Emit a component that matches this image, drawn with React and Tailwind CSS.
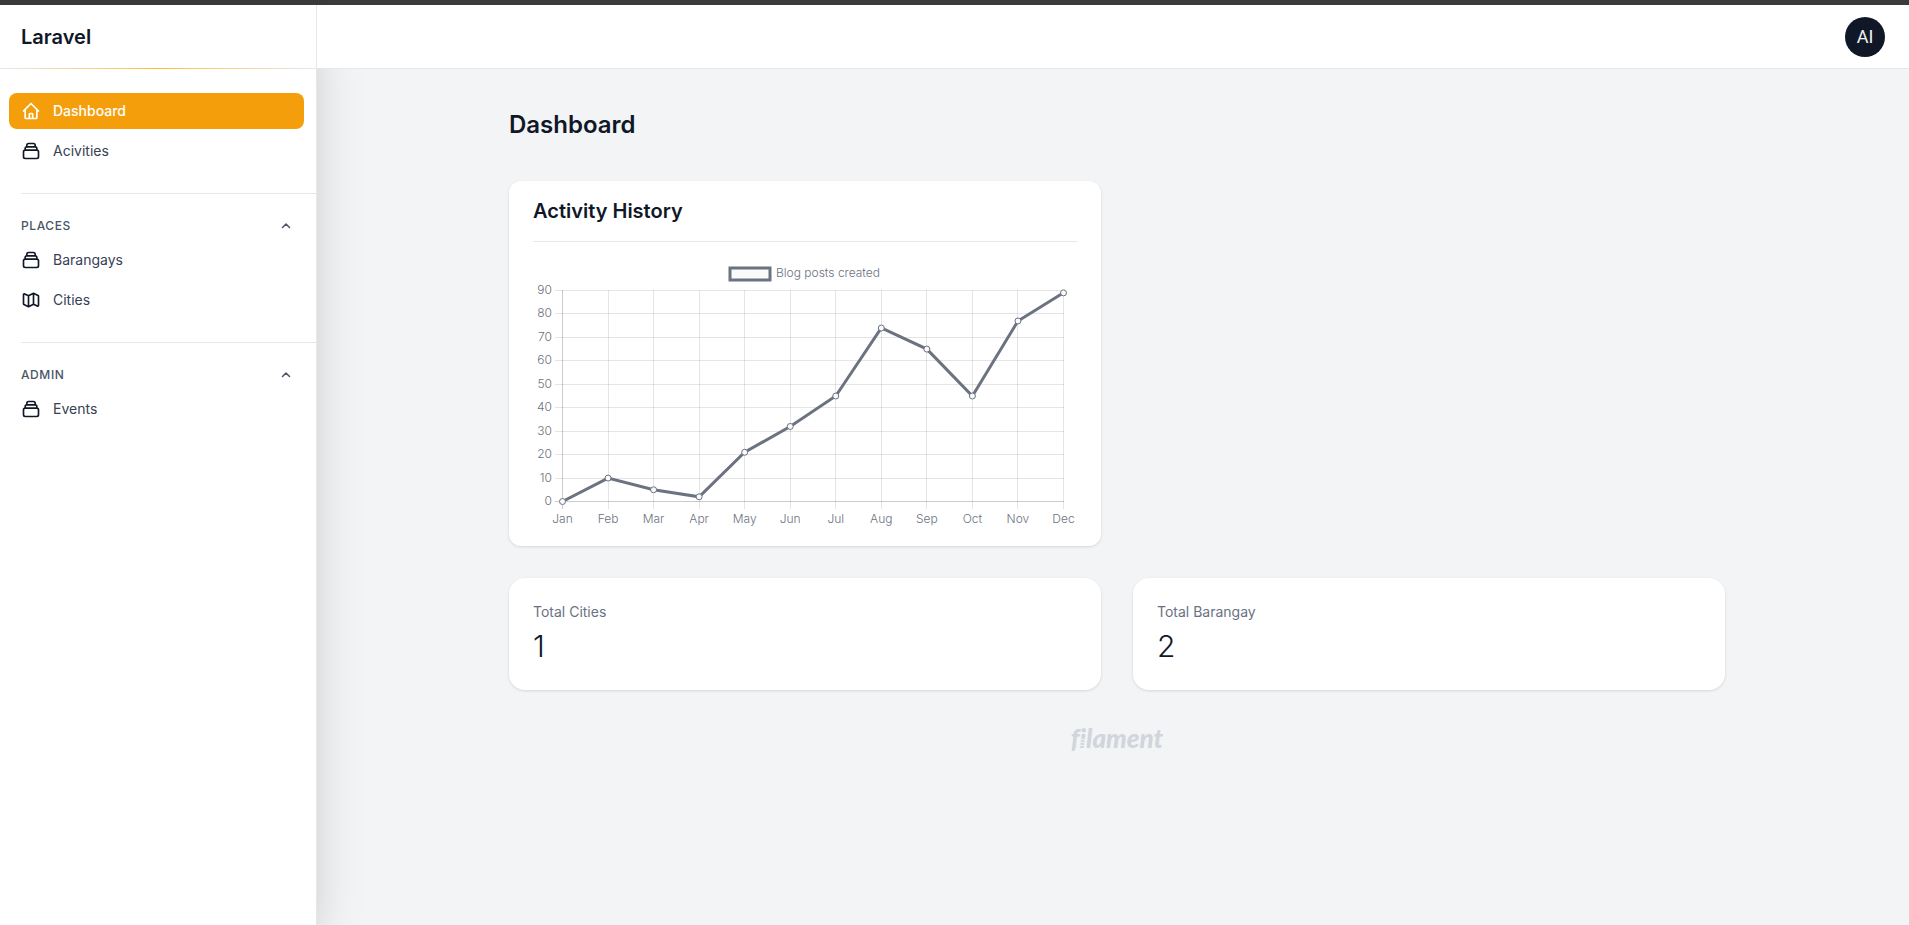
import React from 'react';

const ICONS = {
  home: 'M3 12l2-2m0 0l7-7 7 7M5 10v10a1 1 0 001 1h3m10-11l2 2m-2-2v10a1 1 0 01-1 1h-3m-6 0a1 1 0 001-1v-4a1 1 0 011-1h2a1 1 0 011 1v4a1 1 0 001 1m-6 0h6',
  collection:
    'M19 11H5m14 0a2 2 0 012 2v6a2 2 0 01-2 2H5a2 2 0 01-2-2v-6a2 2 0 012-2m14 0V9a2 2 0 00-2-2M5 11V9a2 2 0 012-2m0 0V5a2 2 0 012-2h6a2 2 0 012 2v2M7 7h10',
  map: 'M9 20l-5.447-2.724A1 1 0 013 16.382V5.618a1 1 0 011.447-.894L9 7m0 13l6-3m-6 3V7m6 10l4.553 2.276A1 1 0 0021 18.382V7.618a1 1 0 00-.553-.894L15 4m0 13V4m0 0L9 7',
  chevronUp: 'M5 15l7-7 7 7',
};

function Icon({ name, strokeWidth = 2, className }) {
  return (
    <svg
      viewBox="0 0 24 24"
      fill="none"
      stroke="currentColor"
      strokeWidth={strokeWidth}
      strokeLinecap="round"
      strokeLinejoin="round"
      aria-hidden="true"
      className={className}
    >
      <path d={ICONS[name]} />
    </svg>
  );
}

function NavItem({ icon, label, active }) {
  return (
    <li>
      <a
        href="#"
        aria-current={active ? 'page' : undefined}
        className={
          active
            ? 'flex h-9 items-center gap-3 rounded-lg bg-[#f59e0b] px-3 text-sm font-medium text-white'
            : 'flex h-9 items-center gap-3 rounded-lg px-3 text-sm text-gray-700'
        }
      >
        <Icon name={icon} className={active ? 'size-5 shrink-0' : 'size-5 shrink-0 text-gray-900'} />
        {label}
      </a>
    </li>
  );
}

function NavGroup({ title, children }) {
  return (
    <section>
      {title && (
        <button type="button" className="mb-2 flex h-4 w-full items-center justify-between px-3 text-gray-600">
          <span className="text-xs font-medium tracking-wider uppercase">{title}</span>
          <Icon name="chevronUp" strokeWidth={3} className="size-3" />
        </button>
      )}
      <ul className="flex flex-col gap-1">{children}</ul>
    </section>
  );
}

function NavDivider() {
  return <hr className="-mr-3 ml-3 border-gray-200" />;
}

const MONTHS = ['Jan', 'Feb', 'Mar', 'Apr', 'May', 'Jun', 'Jul', 'Aug', 'Sep', 'Oct', 'Nov', 'Dec'];
const POSTS = [0, 10, 5, 2, 21, 32, 45, 74, 65, 45, 77, 89];
const TICKS = [0, 10, 20, 30, 40, 50, 60, 70, 80, 90];

const xAt = (i) => 29.5 + (i * 501) / 11;
const yAt = (v) => 243.5 - (v * 211) / 90;
const snap = (n) => Math.floor(n) + 0.5;

function ActivityChart() {
  return (
    <svg
      viewBox="0 0 544 272"
      role="img"
      aria-label="Blog posts created"
      className="h-auto w-full font-['Inter',sans-serif] text-[12px] font-light"
    >
      <rect x="197" y="10" width="40" height="12" fill="#f9fafb" stroke="#6b7280" strokeWidth="3" />
      <text x="243" y="19" fill="#6b7280">
        Blog posts created
      </text>
      {TICKS.map((t) => (
        <g key={t}>
          <line
            x1="22"
            x2="531"
            y1={snap(yAt(t))}
            y2={snap(yAt(t))}
            stroke="#000"
            strokeOpacity={t === 0 ? 0.2 : 0.1}
          />
          <text x="19" y={snap(yAt(t)) + 3} textAnchor="end" fill="#6b7280">
            {t}
          </text>
        </g>
      ))}
      {MONTHS.map((m, i) => (
        <g key={m}>
          <line
            x1={snap(xAt(i))}
            x2={snap(xAt(i))}
            y1="32"
            y2="251"
            stroke="#000"
            strokeOpacity={i === 0 ? 0.2 : 0.1}
          />
          <text x={xAt(i)} y="265" textAnchor="middle" fill="#6b7280">
            {m}
          </text>
        </g>
      ))}
      <polyline
        points={POSTS.map((v, i) => `${xAt(i)},${yAt(v)}`).join(' ')}
        fill="none"
        stroke="#6b7280"
        strokeWidth="3"
      />
      {POSTS.map((v, i) => (
        <circle key={i} cx={xAt(i)} cy={yAt(v)} r="3" fill="#f9fafb" stroke="#6b7280" />
      ))}
    </svg>
  );
}

function StatCard({ label, value }) {
  return (
    <div className="flex flex-col gap-1 rounded-2xl bg-white p-6 shadow-[0_1px_3px_rgba(0,0,0,0.12)]">
      <div className="text-sm text-gray-500">{label}</div>
      <div className="text-3xl leading-10 font-light text-gray-900">{value}</div>
    </div>
  );
}

function FilamentLogo() {
  return (
    <a
      href="#"
      className="relative font-['Lato',sans-serif] text-[26px] leading-8 font-black text-gray-300 italic [font-variant-ligatures:none]"
    >
      filament
      <svg
        viewBox="0 0 8 12"
        fill="none"
        stroke="#f3f4f6"
        aria-hidden="true"
        className="absolute top-[15px] left-[9px] h-3 w-2"
      >
        <path d="M0 2l7 1.500M0 5l7 1.500M0 8l7 1.500" />
      </svg>
    </a>
  );
}

export default function App() {
  return (
    <div className="flex min-h-screen flex-col bg-gray-100 font-['Inter',sans-serif] text-gray-900">
      <div className="h-[5px] bg-[#3b3b3b]" />
      <div className="flex flex-1">
        <aside className="flex w-[317px] shrink-0 flex-col border-r border-gray-200 bg-white shadow-2xl">
          <div className="flex h-[63px] items-center px-[21px]">
            <a href="#" className="text-xl font-semibold text-gray-900">
              Laravel
            </a>
          </div>
          <div className="h-px bg-linear-to-r from-gray-200 via-[#fbbf24] to-gray-200" />
          <nav className="flex flex-col gap-6 py-6 pr-3 pl-[9px]">
            <NavGroup>
              <NavItem icon="home" label="Dashboard" active />
              <NavItem icon="collection" label="Acivities" />
            </NavGroup>
            <NavDivider />
            <NavGroup title="Places">
              <NavItem icon="collection" label="Barangays" />
              <NavItem icon="map" label="Cities" />
            </NavGroup>
            <NavDivider />
            <NavGroup title="Admin">
              <NavItem icon="collection" label="Events" />
            </NavGroup>
          </nav>
        </aside>

        <div className="flex flex-1 flex-col">
          <header className="relative flex h-16 items-center justify-end border-b border-gray-200 bg-white px-6">
            <button
              type="button"
              aria-label="User menu"
              className="flex size-10 items-center justify-center rounded-full bg-gray-900 font-['Roboto',sans-serif] text-lg text-gray-100"
            >
              AI
            </button>
          </header>
          <div className="pl-2">
            <main className="mx-auto flex max-w-[1280px] flex-col gap-6 px-8 py-6">
              <div className="py-4">
                <h1 className="text-2xl font-semibold">Dashboard</h1>
              </div>
              <div className="grid grid-cols-2 gap-8">
                <section className="rounded-xl bg-white px-6 py-4 shadow-[0_1px_3px_rgba(0,0,0,0.12)]">
                  <h2 className="text-xl leading-7 font-semibold">Activity History</h2>
                  <hr className="my-4 border-gray-200" />
                  <ActivityChart />
                </section>
                <div />
                <StatCard label="Total Cities" value="1" />
                <StatCard label="Total Barangay" value="2" />
              </div>
            </main>
            <footer className="flex justify-center pt-2">
              <FilamentLogo />
            </footer>
          </div>
        </div>
      </div>
    </div>
  );
}
